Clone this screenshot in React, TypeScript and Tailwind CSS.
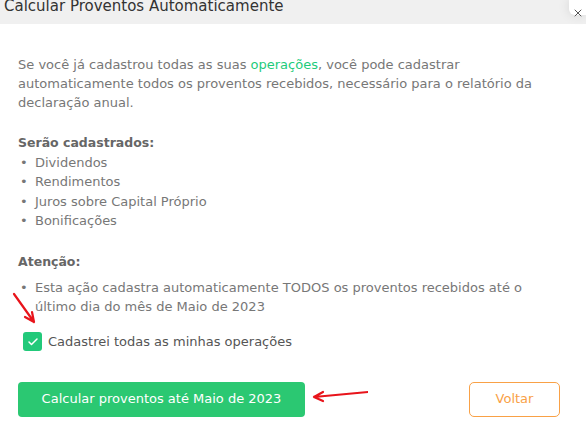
import { Check, X } from 'lucide-react';

const items = ['Dividendos', 'Rendimentos', 'Juros sobre Capital Próprio', 'Bonificações'];

function RedArrow({ className, d }: { className: string; d: string }) {
  return (
    <svg className={className} viewBox="0 0 60 40" fill="none">
      <path d={d} stroke="#e8141b" strokeWidth="2.2" strokeLinecap="round" />
    </svg>
  );
}

export default function App() {
  return (
    <div
      className="relative w-[586px] h-[439px] overflow-hidden bg-white text-[13px] text-[#777]"
      style={{ fontFamily: '"DejaVu Sans", sans-serif' }}
    >
      {/* header bar, title scrolled partly out of view */}
      <div className="flex h-6 items-end overflow-hidden bg-[#f0f0f0] pl-1">
        <h2 className="pb-[10px] text-[15px] leading-none text-[#333]">Calcular Proventos Automaticamente</h2>
      </div>
      <button
        type="button"
        className="absolute right-0 top-0 flex h-[15px] w-[17px] items-end justify-center rounded-bl-md bg-white text-[#555] shadow-[0_0_12px_rgba(0,0,0,0.12)]"
        aria-label="Fechar"
      >
        <X className="-mb-[4px] h-3 w-3" />
      </button>

      <div className="pl-[18px] pr-[46px] pt-[31px]">
        <p className="leading-[19px]">
          Se você já cadastrou todas as suas <span className="text-[#1ecb7b]">operações</span>, você pode cadastrar
          automaticamente todos os proventos recebidos, necessário para o relatório da declaração anual.
        </p>

        <div className="mt-[21px] leading-[19.5px]">
          <p className="text-[12.5px] font-bold text-[#666]">Serão cadastrados:</p>
          <ul>
            {items.map((item) => (
              <li key={item} className="flex">
                <span className="w-[17px] pl-[2px]">•</span>
                {item}
              </li>
            ))}
          </ul>
        </div>

        <p className="mt-[21px] text-[12.5px] font-bold leading-[19.5px] text-[#666]">Atenção:</p>
        <div className="mt-[7px] flex leading-[19px]">
          <span className="w-[17px] shrink-0 pl-[2px]">•</span>
          <span>Esta ação cadastra automaticamente TODOS os proventos recebidos até o último dia do mês de Maio de 2023</span>
        </div>

        <label className="mt-4 flex items-center gap-[6px] pl-[5px] text-[#555]">
          <span className="flex h-[19px] w-[19px] items-center justify-center rounded-[3px] bg-[#22c97a]">
            <Check className="h-3 w-3 text-white" strokeWidth={3} />
          </span>
          Cadastrei todas as minhas operações
        </label>
      </div>

      <div className="mt-[30px] flex items-center justify-between pl-[18px] pr-[26px]">
        <button
          type="button"
          className="h-[35px] w-[287px] rounded-[4px] bg-[#2bc872] text-[13px] text-white"
        >
          Calcular proventos até Maio de 2023
        </button>
        <button
          type="button"
          className="h-[35px] w-[91px] rounded-[5px] border border-[#f9a146] text-[13px] text-[#f9a146]"
        >
          Voltar
        </button>
      </div>

      {/* annotation arrows */}
      <RedArrow className="absolute left-[8px] top-[288px] h-[40px] w-[60px]" d="M6 6 L26 34 M26 34 L17 29 M26 34 L24 24" />
      <RedArrow className="absolute left-[308px] top-[374px] h-[40px] w-[60px]" d="M60 18 L6 23 M6 23 L15 18 M6 23 L15 27" />
    </div>
  );
}
